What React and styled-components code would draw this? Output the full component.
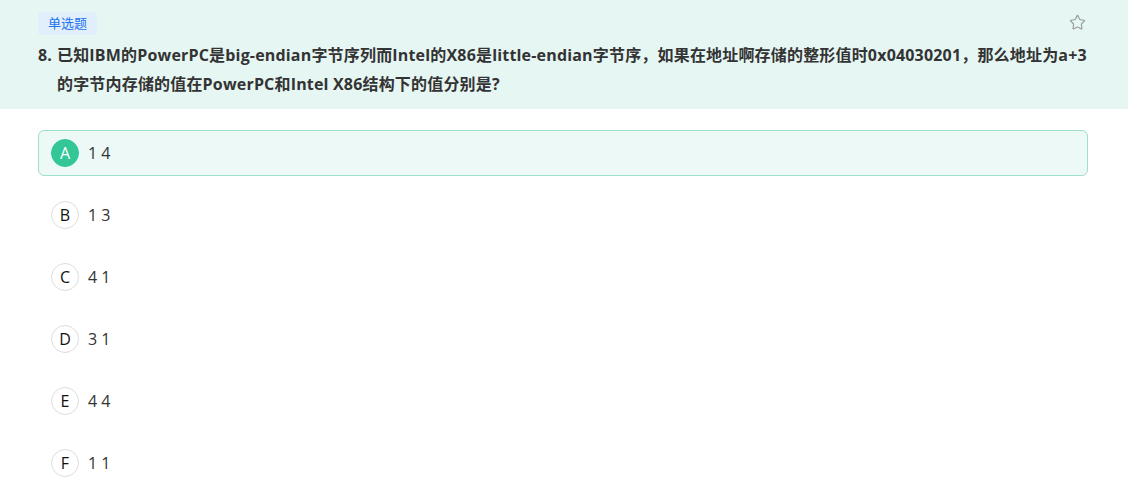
import React from 'react';
import styled, { createGlobalStyle } from 'styled-components';
import { Star } from 'lucide-react';

const GlobalStyle = createGlobalStyle`
  body {
    margin: 0;
    background: #ffffff;
    font-family: 'Open Sans', 'Noto Sans CJK SC', sans-serif;
    color: #333333;
  }
`;

const StyledHeader = styled.header`
  background: #e6f6f3;
  padding: 12px 40px 10px 38px;
`;

const StyledTopRow = styled.div`
  display: flex;
  justify-content: space-between;
  align-items: flex-start;
`;

const StyledTag = styled.span`
  display: inline-block;
  padding: 0 10px;
  height: 23px;
  line-height: 23px;
  border-radius: 4px;
  background: #e1eefc;
  color: #1f75f0;
  font-size: 13px;
`;

const StyledStar = styled.button`
  border: 0;
  background: none;
  padding: 0;
  margin: 2px 2px 0 0;
  color: #9a9a9a;
  cursor: pointer;
  display: flex;
`;

const StyledQuestion = styled.div`
  display: flex;
  margin-top: 6px;
  font-size: 16px;
  font-weight: 700;
  line-height: 29px;
  letter-spacing: 0.18px;
  color: #333333;

  span:first-child {
    flex: none;
    width: 19px;
  }
`;

const StyledOptions = styled.ul`
  list-style: none;
  margin: 0;
  padding: 21px 40px 0 38px;
  display: flex;
  flex-direction: column;
  gap: 16px;
`;

const StyledOption = styled.li`
  display: flex;
  align-items: center;
  gap: 9px;
  height: 46px;
  box-sizing: border-box;
  padding: 0 12px;
  border: 1px solid ${(p) => (p.$selected ? '#9fe0c9' : 'transparent')};
  border-radius: 6px;
  background: ${(p) => (p.$selected ? '#edf9f6' : 'transparent')};
  font-size: 16px;
  color: #333333;
  cursor: pointer;
`;

const StyledLetter = styled.span`
  width: 28px;
  height: 28px;
  box-sizing: border-box;
  border-radius: 50%;
  display: flex;
  align-items: center;
  justify-content: center;
  font-size: 16px;
  border: 1px solid ${(p) => (p.$selected ? '#33c797' : '#dddddd')};
  background: ${(p) => (p.$selected ? '#33c797' : '#ffffff')};
  color: ${(p) => (p.$selected ? '#ffffff' : '#111111')};
`;

const options = [
  { key: 'A', text: '1 4' },
  { key: 'B', text: '1 3' },
  { key: 'C', text: '4 1' },
  { key: 'D', text: '3 1' },
  { key: 'E', text: '4 4' },
  { key: 'F', text: '1 1' },
];

const App = () => {
  const selected = 'A';

  return (
    <>
      <GlobalStyle />
      <StyledHeader>
        <StyledTopRow>
          <StyledTag>单选题</StyledTag>
          <StyledStar aria-label="收藏">
            <Star size={17} strokeWidth={1.6} />
          </StyledStar>
        </StyledTopRow>
        <StyledQuestion>
          <span>8.</span>
          <span>
            已知IBM的PowerPC是big-endian字节序列而Intel的X86是little-endian字节序，如果在地址啊存储的整形值时0x04030201，那么地址为a+3的字节内存储的值在PowerPC和Intel X86结构下的值分别是?
          </span>
        </StyledQuestion>
      </StyledHeader>

      <StyledOptions>
        {options.map((o) => (
          <StyledOption key={o.key} $selected={o.key === selected}>
            <StyledLetter $selected={o.key === selected}>{o.key}</StyledLetter>
            {o.text}
          </StyledOption>
        ))}
      </StyledOptions>
    </>
  );
};

export default App;
